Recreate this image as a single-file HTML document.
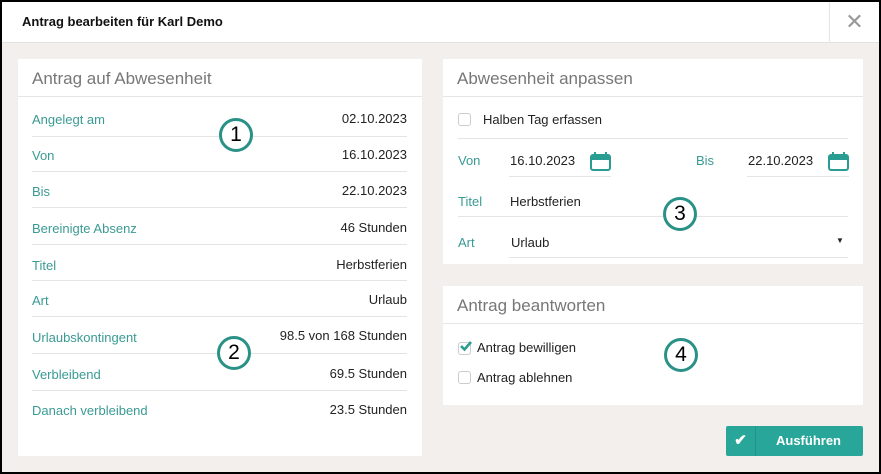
<!DOCTYPE html>
<html><head><style>
*{margin:0;padding:0;box-sizing:border-box}
body{width:881px;height:474px;background:#000;font-family:"Liberation Sans",sans-serif;position:relative;overflow:hidden}
.win{position:absolute;left:2px;top:2px;width:877px;height:470px;background:#f2efec}
.top{position:absolute;left:0;top:0;width:877px;height:41px;background:#fff;border-bottom:1px solid #e4e0dc}
.top .t{position:absolute;left:20px;top:12px;font-size:13px;font-weight:bold;color:#111}
.top .x{position:absolute;right:0;top:0;width:50px;height:41px;border-left:1px solid #e8e4e0;color:#999;font-size:22px;text-align:center;line-height:40px}
.p{position:absolute;background:#fff}
.h{height:38px;border-bottom:1px solid #e6e6e6;font-size:17px;color:#777;padding:10px 14px}
.abs{position:absolute;font-size:13px;color:#222;white-space:nowrap}
.lab{color:#3a9a94}
.line{position:absolute;height:1px;background:#e4e4e4}
.cb{position:absolute;width:13px;height:13px;border:1px solid #ccc;border-radius:3px;background:#fff}
.num{position:absolute;width:34px;height:34px;border:3px solid #2a9187;border-radius:50%;background:#fff;font-size:21px;text-align:center;line-height:28px;color:#000}
.btn{position:absolute;left:724px;top:424px;width:137px;height:30px;background:#29a69a;border-radius:2px;color:#fff;font-weight:bold;font-size:13px}
</style></head><body>
<div class="win">
<div class="top"><div class="t">Antrag bearbeiten für Karl Demo</div><div class="x">✕</div></div>
<div class="p" style="left:16px;top:57px;width:404px;height:397px"><div class="h">Antrag auf Abwesenheit</div></div>
<div class="p" style="left:441px;top:57px;width:420px;height:205px"><div class="h">Abwesenheit anpassen</div></div>
<div class="p" style="left:441px;top:284px;width:420px;height:119px"><div class="h">Antrag beantworten</div></div>
<div class="btn"><div style="position:absolute;left:0;top:0;width:30px;height:30px;border-right:1px solid #23948a;text-align:center;line-height:30px;font-size:15px">✔</div><div style="position:absolute;left:50px;top:7px">Ausführen</div></div>
</div>

<div class="abs lab" style="left:32px;top:112px">Angelegt am</div><div class="abs" style="right:474px;top:111px">02.10.2023</div>
<div class="line" style="left:32px;width:375px;top:136px"></div>
<div class="abs lab" style="left:32px;top:148px">Von</div><div class="abs" style="right:474px;top:147px">16.10.2023</div>
<div class="line" style="left:32px;width:375px;top:171px"></div>
<div class="abs lab" style="left:32px;top:184px">Bis</div><div class="abs" style="right:474px;top:183px">22.10.2023</div>
<div class="line" style="left:32px;width:375px;top:207px"></div>
<div class="abs lab" style="left:32px;top:221px">Bereinigte Absenz</div><div class="abs" style="right:474px;top:220px">46 Stunden</div>
<div class="line" style="left:32px;width:375px;top:244px"></div>
<div class="abs lab" style="left:32px;top:258px">Titel</div><div class="abs" style="right:474px;top:257px">Herbstferien</div>
<div class="line" style="left:32px;width:375px;top:280px"></div>
<div class="abs lab" style="left:32px;top:293px">Art</div><div class="abs" style="right:474px;top:292px">Urlaub</div>
<div class="line" style="left:32px;width:375px;top:316px"></div>
<div class="abs lab" style="left:32px;top:330px">Urlaubskontingent</div><div class="abs" style="right:474px;top:328px">98.5 von 168 Stunden</div>
<div class="line" style="left:32px;width:375px;top:353px"></div>
<div class="abs lab" style="left:32px;top:367px">Verbleibend</div><div class="abs" style="right:474px;top:366px">69.5 Stunden</div>
<div class="line" style="left:32px;width:375px;top:390px"></div>
<div class="abs lab" style="left:32px;top:403px">Danach verbleibend</div><div class="abs" style="right:474px;top:402px">23.5 Stunden</div>

<div class="cb" style="left:458px;top:113px"></div><div class="abs" style="left:483px;top:112px">Halben Tag erfassen</div>
<div class="line" style="left:458px;width:390px;top:138px"></div>
<div class="abs lab" style="left:458px;top:153px">Von</div><div class="abs" style="left:510px;top:153px">16.10.2023</div>
<div class="abs lab" style="left:696px;top:153px">Bis</div><div class="abs" style="left:748px;top:153px">22.10.2023</div>
<svg style="position:absolute;left:590px;top:152px" width="21" height="19" viewBox="0 0 21 19"><rect x="1" y="3" width="19" height="15" rx="2" fill="none" stroke="#2a9d92" stroke-width="2"/><rect x="1" y="3" width="19" height="5" fill="#2a9d92"/><rect x="4" y="0" width="2" height="5" fill="#2a9d92"/><rect x="15" y="0" width="2" height="5" fill="#2a9d92"/></svg>
<svg style="position:absolute;left:828px;top:152px" width="21" height="19" viewBox="0 0 21 19"><rect x="1" y="3" width="19" height="15" rx="2" fill="none" stroke="#2a9d92" stroke-width="2"/><rect x="1" y="3" width="19" height="5" fill="#2a9d92"/><rect x="4" y="0" width="2" height="5" fill="#2a9d92"/><rect x="15" y="0" width="2" height="5" fill="#2a9d92"/></svg>
<div class="line" style="left:509px;width:102px;top:176px"></div>
<div class="line" style="left:747px;width:102px;top:176px"></div>
<div class="abs lab" style="left:458px;top:194px">Titel</div><div class="abs" style="left:510px;top:194px">Herbstferien</div>
<div class="line" style="left:458px;width:390px;top:216px"></div>
<div class="abs lab" style="left:458px;top:235px">Art</div><div class="abs" style="left:511px;top:235px">Urlaub</div>
<div class="abs" style="left:836px;top:236px;font-size:8px">▼</div>
<div class="line" style="left:509px;width:339px;top:257px"></div>

<div class="cb" style="left:458px;top:342px"></div>
<svg style="position:absolute;left:459px;top:340px" width="14" height="12" viewBox="0 0 14 12"><path d="M2 6 L5.5 9.5 L12 2" fill="none" stroke="#2a9d92" stroke-width="2.6"/></svg>
<div class="abs" style="left:477px;top:340px">Antrag bewilligen</div>
<div class="cb" style="left:458px;top:371px"></div><div class="abs" style="left:477px;top:370px">Antrag ablehnen</div>

<div class="num" style="left:219px;top:118px">1</div>
<div class="num" style="left:217px;top:336px">2</div>
<div class="num" style="left:663px;top:197px">3</div>
<div class="num" style="left:664px;top:338px">4</div>
</body></html>
